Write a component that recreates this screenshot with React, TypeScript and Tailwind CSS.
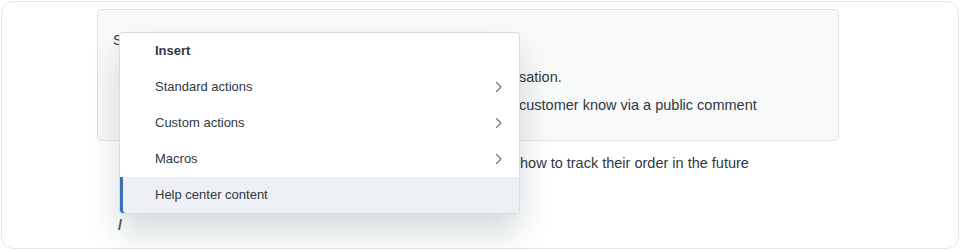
const items = [
  { label: 'Standard actions', submenu: true },
  { label: 'Custom actions', submenu: true },
  { label: 'Macros', submenu: true },
  { label: 'Help center content', submenu: false, active: true },
];

function Chevron() {
  return (
    <svg width="8" height="12" viewBox="0 0 8 12" fill="none" className="text-[#68737d]">
      <path d="M1.5 1.5L6 6l-4.5 4.5" stroke="currentColor" strokeWidth="1.1" strokeLinecap="round" strokeLinejoin="round" />
    </svg>
  );
}

export default function App() {
  return (
    <div className="w-[962px] h-[250px] bg-white" style={{ fontFamily: '"Liberation Sans", Arial, sans-serif' }}>
      <div className="relative ml-[1px] mt-[1px] w-[958px] h-[248px] rounded-[12px] border border-[#e6e8ea] pl-[95px] pt-[7px] text-[14.5px] leading-[20px] text-[#2f3941]">
        {/* Suggestions box, mostly covered by the menu */}
        <div className="w-[742px] h-[132px] rounded-[5px] border border-[#dfe3e4] bg-[#f8f9f9] pl-[15px] pt-[20px]">
          <p>S</p>
          <p className="mt-[17px] flex whitespace-nowrap">
            <span className="w-[406px] shrink-0" />
            <span>sation.</span>
          </p>
          <p className="mt-[8px] flex whitespace-nowrap">
            <span className="w-[406px] shrink-0" />
            <span>customer know via a public comment</span>
          </p>
        </div>

        <p className="mt-[12px] flex whitespace-nowrap">
          <span className="w-[423px] shrink-0" />
          <span>how to track their order in the future</span>
        </p>
        <p className="mt-[42px] pl-[21px] font-bold text-[#49545c]">/</p>

        {/* Insert menu */}
        <div className="absolute left-[117px] top-[30px] w-[401px] rounded-[4px] border border-[#d8dcde] bg-white shadow-[0_20px_32px_rgba(4,40,50,0.16)] text-[13px] text-[#2f3941]">
          <div className="flex h-[36px] items-center pl-[35px] font-bold">Insert</div>
          {items.map((item) => (
            <div
              key={item.label}
              className={
                item.active
                  ? 'flex h-[36px] items-center justify-between pl-[35px] pr-[16px] bg-[#edf1f6] shadow-[inset_3px_0_0_#3b6fb6] rounded-b-[3px]'
                  : 'flex h-[36px] items-center justify-between pl-[35px] pr-[16px]'
              }
            >
              <span>{item.label}</span>
              {item.submenu && <Chevron />}
            </div>
          ))}
        </div>
      </div>
    </div>
  );
}
